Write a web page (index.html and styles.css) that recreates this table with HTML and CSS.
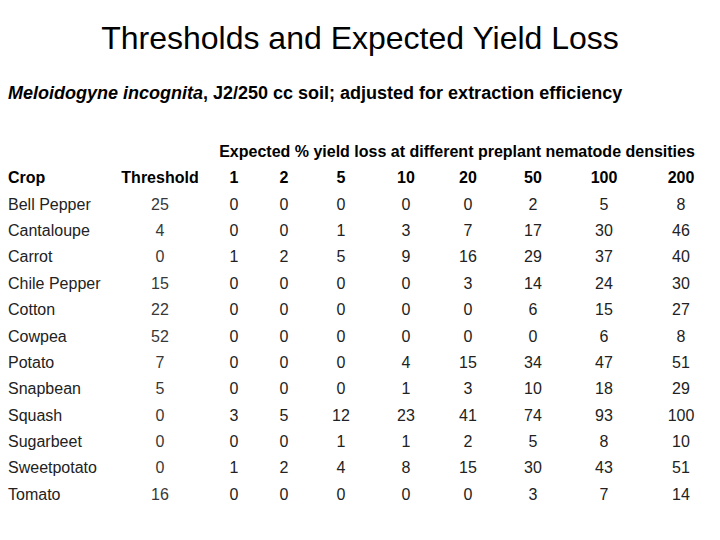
FILE: index.html
```html
<!DOCTYPE html>
<html>
<head>
<meta charset="utf-8">
<link rel="stylesheet" href="styles.css">
</head>
<body>
<h1 class="title">Thresholds and Expected Yield Loss</h1>
<p class="subtitle"><i>Meloidogyne incognita</i>, J2/250 cc soil; adjusted for extraction efficiency</p>
<div class="table">
  <div class="span-head">Expected % yield loss at different preplant nematode densities</div>
  <div class="hd left">Crop</div><div class="hd">Threshold</div><div class="hd">1</div><div class="hd">2</div><div class="hd">5</div><div class="hd">10</div><div class="hd">20</div><div class="hd">50</div><div class="hd">100</div><div class="hd">200</div>
  <div class="left">Bell Pepper</div><div class="th">25</div><div>0</div><div>0</div><div>0</div><div>0</div><div>0</div><div>2</div><div>5</div><div>8</div>
  <div class="left">Cantaloupe</div><div class="th">4</div><div>0</div><div>0</div><div>1</div><div>3</div><div>7</div><div>17</div><div>30</div><div>46</div>
  <div class="left">Carrot</div><div class="th">0</div><div>1</div><div>2</div><div>5</div><div>9</div><div>16</div><div>29</div><div>37</div><div>40</div>
  <div class="left">Chile Pepper</div><div class="th">15</div><div>0</div><div>0</div><div>0</div><div>0</div><div>3</div><div>14</div><div>24</div><div>30</div>
  <div class="left">Cotton</div><div class="th">22</div><div>0</div><div>0</div><div>0</div><div>0</div><div>0</div><div>6</div><div>15</div><div>27</div>
  <div class="left">Cowpea</div><div class="th">52</div><div>0</div><div>0</div><div>0</div><div>0</div><div>0</div><div>0</div><div>6</div><div>8</div>
  <div class="left">Potato</div><div class="th">7</div><div>0</div><div>0</div><div>0</div><div>4</div><div>15</div><div>34</div><div>47</div><div>51</div>
  <div class="left">Snapbean</div><div class="th">5</div><div>0</div><div>0</div><div>0</div><div>1</div><div>3</div><div>10</div><div>18</div><div>29</div>
  <div class="left">Squash</div><div class="th">0</div><div>3</div><div>5</div><div>12</div><div>23</div><div>41</div><div>74</div><div>93</div><div>100</div>
  <div class="left">Sugarbeet</div><div class="th">0</div><div>0</div><div>0</div><div>1</div><div>1</div><div>2</div><div>5</div><div>8</div><div>10</div>
  <div class="left">Sweetpotato</div><div class="th">0</div><div>1</div><div>2</div><div>4</div><div>8</div><div>15</div><div>30</div><div>43</div><div>51</div>
  <div class="left">Tomato</div><div class="th">16</div><div>0</div><div>0</div><div>0</div><div>0</div><div>0</div><div>3</div><div>7</div><div>14</div>
</div>
</body>
</html>
```
FILE: styles.css
```css
html, body {
  margin: 0;
  padding: 0;
  background: #fff;
  color: #000;
  font-family: "Liberation Sans", Arial, sans-serif;
}
.title {
  margin: 0;
  height: 76px;
  line-height: 76px;
  font-size: 32px;
  font-weight: normal;
  text-align: center;
}
.subtitle {
  margin: 0 0 0 8px;
  height: 34px;
  line-height: 34px;
  font-size: 18px;
  font-weight: bold;
}
.table {
  margin: 29px 0 0 8px;
  display: grid;
  grid-template-columns: 112px 80px 68px 32px 82px 48px 76px 54px 88px 66px;
  grid-auto-rows: 26.36px;
  line-height: 26.36px;
  font-size: 16px;
  color: #222;
}
.table > div {
  text-align: center;
  white-space: nowrap;
}
.table > .left {
  text-align: left;
}
.table > .span-head {
  grid-column: 3 / 11;
  font-weight: bold;
  color: #000;
  text-align: center;
}
.table > .hd {
  font-weight: bold;
  color: #000;
}
.table > .th {
  color: #383838;
}
```
